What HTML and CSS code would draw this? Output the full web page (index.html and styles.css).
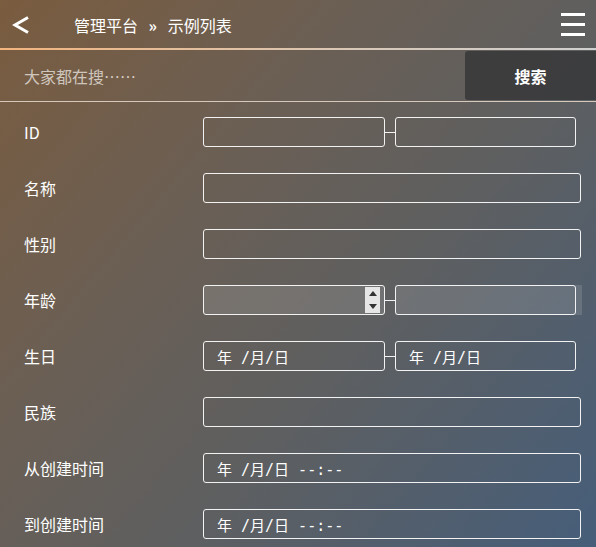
FILE: index.html
```html
<!DOCTYPE html>
<html lang="zh-CN">
<head>
<meta charset="utf-8">
<title>示例列表</title>
<link rel="stylesheet" href="styles.css">
</head>
<body>
<div class="page">
  <header class="topbar">
    <a class="back" href="#" aria-label="返回">
      <svg width="18" height="20" viewBox="0 0 18 20"><polyline points="16,2.5 3,10 16,17.5" fill="none" stroke="#fff" stroke-width="3" stroke-linejoin="miter"/></svg>
    </a>
    <div class="crumbs">管理平台 <span class="sep">»</span> 示例列表</div>
    <div class="menu" aria-label="菜单"><span></span><span></span><span></span></div>
  </header>
  <div class="searchbar">
    <div class="search-input">大家都在搜……</div>
    <button class="search-btn">搜索</button>
  </div>
  <form class="form">
    <div class="row">
      <label class="lbl">ID</label>
      <div class="range">
        <div class="box"></div><span class="dash"></span><div class="box"></div>
      </div>
    </div>
    <div class="row">
      <label class="lbl">名称</label>
      <div class="box full"></div>
    </div>
    <div class="row">
      <label class="lbl">性别</label>
      <div class="box full"></div>
    </div>
    <div class="row">
      <label class="lbl">年龄</label>
      <div class="range">
        <div class="box num">
          <span class="spin"><i class="up"></i><i class="down"></i></span>
        </div><span class="dash"></span><div class="numwrap"><div class="box num2"></div></div>
      </div>
    </div>
    <div class="row">
      <label class="lbl">生日</label>
      <div class="range">
        <div class="box date">年 /月/日</div><span class="dash"></span><div class="box date">年 /月/日</div>
      </div>
    </div>
    <div class="row">
      <label class="lbl">民族</label>
      <div class="box full"></div>
    </div>
    <div class="row">
      <label class="lbl">从创建时间</label>
      <div class="box full date">年 /月/日 --:--</div>
    </div>
    <div class="row">
      <label class="lbl">到创建时间</label>
      <div class="box full date">年 /月/日 --:--</div>
    </div>
  </form>
</div>
</body>
</html>
```
FILE: styles.css
```css
* { box-sizing: border-box; }
html, body { margin: 0; padding: 0; }
body {
  font-family: "Noto Sans CJK SC", "Noto Sans", sans-serif;
  color: #fff;
}
.page {
  width: 596px;
  height: 547px;
  overflow: hidden;
  background: linear-gradient(130deg, #7a5c3f 0%, #6a5f55 35%, #5e5f60 60%, #465e7a 100%);
}
.topbar {
  height: 50px;
  display: flex;
  align-items: center;
  border-bottom: 2px solid transparent;
  border-image: linear-gradient(to right, #f2b47e, #d8c8b8 60%, #cfcfcf) 1;
  padding-bottom: 1px;
}
.back {
  width: 74px;
  padding-left: 12px;
  display: flex;
  align-items: center;
  height: 20px;
  margin-top: 2px;
}
.crumbs {
  flex: 1;
  font-size: 16px;
  font-weight: 400;
  margin-top: 2px;
}
.sep { margin: 0 7px; font-weight: 700; }
.menu {
  width: 24px;
  margin-right: 11px;
  display: flex;
  flex-direction: column;
  gap: 7px;
  margin-top: 2px;
}
.menu span {
  display: block;
  height: 3px;
  background: #fff;
}
.searchbar {
  height: 52px;
  display: flex;
  align-items: stretch;
  border-bottom: 1px solid #d6c9bb;
  padding-top: 1px;
}
.search-input {
  flex: 1;
  padding-left: 24px;
  font-size: 16px;
  color: #cfc6bd;
  display: flex;
  align-items: center;
}
.search-btn {
  width: 131px;
  border: 0;
  border-radius: 3px 0 0 3px;
  background: rgba(50, 50, 52, 0.75);
  color: #fff;
  font-family: "Noto Sans CJK SC", sans-serif;
  font-size: 16px;
  font-weight: 700;
  margin-bottom: 1px;
}
.form {
  padding: 15px 15px 0 24px;
  display: flex;
  flex-direction: column;
  gap: 26px;
}
.row {
  display: flex;
  align-items: center;
  height: 30px;
}
.lbl {
  width: 179px;
  flex-shrink: 0;
  font-size: 16px;
  font-weight: 400;
}
.box {
  height: 30px;
  border: 1px solid #f2f2f2;
  border-radius: 3px;
  position: relative;
  flex-shrink: 0;
}
.full { width: 378px; }
.range {
  display: flex;
  align-items: center;
}
.range > * { flex-shrink: 0; }
.range > .box { width: 182px; }
.range > .box + .dash + .box { width: 181px; }
.dash {
  width: 10px;
  height: 1px;
  background: #f2f2f2;
}
.num {
  background: rgba(255, 255, 255, 0.12);
}
.spin {
  position: absolute;
  right: 4px;
  top: 1px;
  bottom: 1px;
  width: 15px;
  background: #e6e6e6;
  display: flex;
  flex-direction: column;
  align-items: center;
  justify-content: space-around;
}
.spin i {
  width: 0;
  height: 0;
  border-left: 4px solid transparent;
  border-right: 4px solid transparent;
}
.spin .up { border-bottom: 5px solid #333; }
.spin .down { border-top: 5px solid #333; }
.numwrap {
  width: 187px;
  height: 30px;
  background: rgba(255, 255, 255, 0.12);
}
.num2 { width: 181px; }
.date {
  font-family: "DejaVu Sans Mono", "Noto Sans CJK SC", monospace;
  font-size: 15px;
  padding-left: 13px;
  display: flex;
  align-items: center;
}
```
